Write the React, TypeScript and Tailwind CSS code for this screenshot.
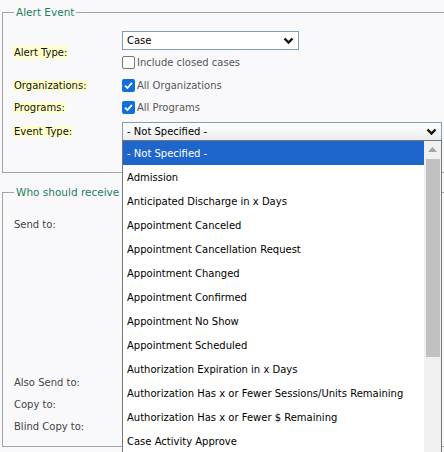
const options = [
  "- Not Specified -",
  "Admission",
  "Anticipated Discharge in x Days",
  "Appointment Canceled",
  "Appointment Cancellation Request",
  "Appointment Changed",
  "Appointment Confirmed",
  "Appointment No Show",
  "Appointment Scheduled",
  "Authorization Expiration in x Days",
  "Authorization Has x or Fewer Sessions/Units Remaining",
  "Authorization Has x or Fewer $ Remaining",
  "Case Activity Approve",
  "Case Activity Denied",
];

function Chevron() {
  return (
    <svg width="11" height="8" viewBox="0 0 11 8" className="shrink-0">
      <path d="M1.5 1.5 L5.5 5.5 L9.5 1.5" fill="none" stroke="#111" strokeWidth="2.4" />
    </svg>
  );
}

function Check({ checked }: { checked?: boolean }) {
  if (!checked)
    return <span className="inline-block h-[13px] w-[13px] shrink-0 rounded-[2px] border border-[#767676] bg-white" />;
  return (
    <span className="inline-flex h-[13px] w-[13px] shrink-0 items-center justify-center rounded-[2px] bg-[#0f6fde]">
      <svg width="11" height="11" viewBox="0 0 11 11">
        <path d="M2 5.6 L4.4 8 L9 2.8" fill="none" stroke="#fff" strokeWidth="1.8" />
      </svg>
    </span>
  );
}

function Label({ children }: { children: React.ReactNode }) {
  return <span className="bg-[#ffffcc] px-px text-[#111]">{children}</span>;
}

export default function App() {
  return (
    <div className="relative h-[452px] w-[444px] overflow-hidden bg-[#f9f9fc] font-['DejaVu_Sans',sans-serif] text-[10px] leading-[13px]">
      {/* alert event */}
      <fieldset className="ml-[2px] mt-[5px] w-[470px] border border-[#a4a4a4] pb-[31px] pl-[10px] pt-[11px]">
        <legend className="ml-px px-[2px] text-[10.5px] leading-[15px] text-[#1d7f5c]">Alert Event</legend>
        <div className="flex flex-col">
          <div className="flex">
            <div className="flex w-[109px] items-center pt-[5px]">
              <Label>Alert Type:</Label>
            </div>
            <div className="flex flex-col gap-[6px]">
              <div className="flex h-[19px] w-[177px] items-center justify-between border border-[#7f9db9] bg-white pl-[4px] pr-[4px] text-black">
                <span>Case</span>
                <Chevron />
              </div>
              <div className="flex h-[13px] items-center gap-[2px] text-[#555]">
                <Check />
                <span>Include closed cases</span>
              </div>
            </div>
          </div>
          <div className="mt-[10px] flex h-[13px] items-center">
            <div className="w-[109px]"><Label>Organizations:</Label></div>
            <div className="flex items-center gap-[2px] text-[#555]">
              <Check checked />
              <span>All Organizations</span>
            </div>
          </div>
          <div className="mt-[9px] flex h-[13px] items-center">
            <div className="w-[109px]"><Label>Programs:</Label></div>
            <div className="flex items-center gap-[2px] text-[#555]">
              <Check checked />
              <span>All Programs</span>
            </div>
          </div>
          <div className="mt-[8px] flex h-[19px] items-center">
            <div className="w-[109px]"><Label>Event Type:</Label></div>
            <div className="flex h-[19px] w-[320px] items-center justify-between border border-[#7f9db9] border-b-[#8a8a8a] bg-gradient-to-b from-white to-[#ececec] pl-[4px] pr-[4px] text-black">
              <span>- Not Specified -</span>
              <Chevron />
            </div>
          </div>
        </div>
      </fieldset>

      {/* recipients */}
      <fieldset className="ml-[2px] mt-[12px] w-[470px] border border-[#a4a4a4] pb-[13px] pl-[10px] pt-[18px] text-[#444]">
        <legend className="ml-px px-[2px] text-[10.5px] leading-[15px] text-[#1d7f5c]">Who should receive this alert?</legend>
        <div className="px-px">Send to:</div>
        <div className="mt-[145px] flex flex-col gap-[9px] px-px">
          <div>Also Send to:</div>
          <div>Copy to:</div>
          <div>Blind Copy to:</div>
        </div>
      </fieldset>

      {/* open dropdown list */}
      <div className="absolute left-[122px] top-[140px] flex h-[330px] w-[320px] border border-[#767676] bg-white">
        <div className="flex-1 overflow-hidden">
          {options.map((o, i) => (
            <div
              key={o}
              className={
                i === 0
                  ? "flex h-[24px] items-center bg-[#1f66cc] pl-[4px] text-white"
                  : "flex h-[24px] items-center pl-[4px] text-black"
              }
            >
              {o}
            </div>
          ))}
        </div>
        <div className="flex w-[17px] flex-col items-center bg-[#f0f0f0] pt-[6px]">
          <svg width="9" height="5" viewBox="0 0 9 5">
            <path d="M0 5 L4.5 0 L9 5 Z" fill="#a3a3a3" />
          </svg>
          <div className="mt-[7px] h-[198px] w-[14px] bg-[#c1c1c1]" />
        </div>
      </div>
    </div>
  );
}
